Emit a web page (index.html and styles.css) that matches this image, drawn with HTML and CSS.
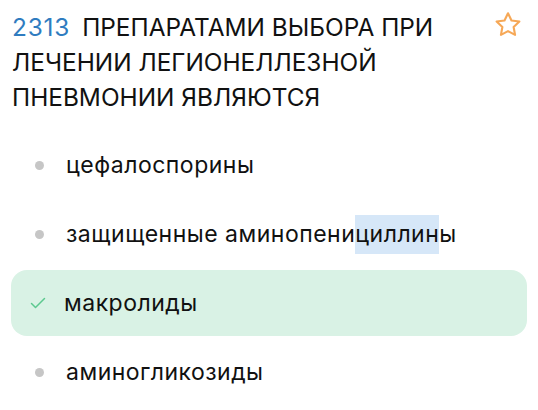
FILE: index.html
```html
<!DOCTYPE html>
<html lang="ru">
<head>
  <meta charset="UTF-8">
  <meta name="viewport" content="width=device-width, initial-scale=1.0">
  <title>Вопрос 2313</title>
  <link rel="stylesheet" href="styles.css">
</head>
<body>

  <div class="question">
      <div class="question-head">
          <h2 class="question-title"><span class="question-num">2313</span><span class="question-text">ПРЕПАРАТАМИ ВЫБОРА ПРИ ЛЕЧЕНИИ ЛЕГИОНЕЛЛЕЗНОЙ ПНЕВМОНИИ ЯВЛЯЮТСЯ</span></h2>
          <button class="fav-btn" type="button" aria-label="В избранное">
              <svg width="30" height="30" viewBox="0 0 24 24" fill="none" stroke="#f6a857" stroke-width="1.7" stroke-linejoin="round">
                  <path d="M12 2.6l2.8 5.8 6.3.85-4.6 4.4 1.15 6.25L12 16.9l-5.65 3 1.15-6.25-4.6-4.4 6.3-.85z"/>
              </svg>
          </button>
      </div>

      <ul class="answers">
          <li class="answer">
              <span class="marker"><span class="dot"></span></span>
              <span class="answer-text">цефалоспорины</span>
          </li>
          <li class="answer">
              <span class="marker"><span class="dot"></span></span>
              <span class="answer-text">защищенные аминопени<mark class="sel">циллин</mark>ы</span>
          </li>
          <li class="answer correct">
              <span class="marker">
                  <svg width="16" height="12" viewBox="0 0 16 12" fill="none" stroke="#5cc98f" stroke-width="1.5" stroke-linecap="round" stroke-linejoin="round">
                      <path d="M1.5 6.5l4 4 9-9"/>
                  </svg>
              </span>
              <span class="answer-text">макролиды</span>
          </li>
          <li class="answer">
              <span class="marker"><span class="dot"></span></span>
              <span class="answer-text">аминогликозиды</span>
          </li>
      </ul>
  </div>

</body>
</html>
```

FILE: styles.css
```css
* {
  margin: 0;
  padding: 0;
  box-sizing: border-box;
}

body {
  font-family: Inter, "Noto Sans", sans-serif;
  background-color: #fff;
  color: #111;
}

.question {
  padding: 10px 11px 0 11px;
}

.question-head {
  display: flex;
  align-items: flex-start;
  justify-content: space-between;
  margin-bottom: 17px;
}

.question-title {
  font-size: 24.4px;
  font-weight: 400;
  line-height: 35px;
  width: 450px;
  padding-left: 1px;
}

.question-num {
  color: #2f7cc0;
  letter-spacing: 0.8px;
  margin-right: 12px;
}

.fav-btn {
  background: none;
  border: none;
  margin: 0 4px 0 0;
  cursor: pointer;
}

.answers {
  list-style: none;
  display: flex;
  flex-direction: column;
  gap: 3px;
}

.answer {
  display: flex;
  align-items: center;
  height: 66px;
  border-radius: 16px;
  font-size: 23px;
  letter-spacing: 0.5px;
}

.answer.correct {
  background-color: #d9f2e5;
}

.marker {
  width: 55px;
  display: flex;
  justify-content: center;
  padding-left: 1px;
}

.correct .marker {
  width: 53px;
  padding-left: 0;
}

.dot {
  width: 9px;
  height: 9px;
  border-radius: 50%;
  background-color: #c6c6c6;
}

.sel {
  background-color: #d6e7f8;
  color: inherit;
  padding: 5px 0 6px;
}
```
